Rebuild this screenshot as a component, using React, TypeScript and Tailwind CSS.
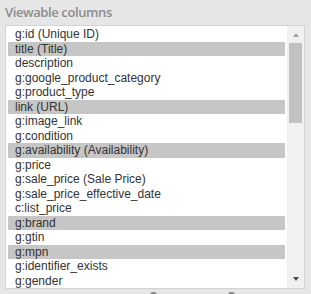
import React from 'react';

const columns: { name: string; selected?: boolean }[] = [
  { name: 'g:id (Unique ID)' },
  { name: 'title (Title)', selected: true },
  { name: 'description' },
  { name: 'g:google_product_category' },
  { name: 'g:product_type' },
  { name: 'link (URL)', selected: true },
  { name: 'g:image_link' },
  { name: 'g:condition' },
  { name: 'g:availability (Availability)', selected: true },
  { name: 'g:price' },
  { name: 'g:sale_price (Sale Price)' },
  { name: 'g:sale_price_effective_date' },
  { name: 'c:list_price' },
  { name: 'g:brand', selected: true },
  { name: 'g:gtin' },
  { name: 'g:mpn', selected: true },
  { name: 'g:identifier_exists' },
  { name: 'g:gender' },
];

export default function App() {
  return (
    <div className="w-[311px] h-[294px] overflow-hidden bg-[#e6e6e6] font-['Liberation_Sans',Arial,sans-serif]">
      <div className="pl-[5px] pt-[4px] h-[25px] text-[13px] leading-[16px] font-['Open_Sans',sans-serif] font-semibold text-[#8c8c8c] tracking-[-0.4px]">
        Viewable columns
      </div>

      <div className="ml-[5px] w-[300px] h-[264px] flex border border-[#d4d4d4] bg-white">
        {/* option list */}
        <div className="flex-1 overflow-hidden pl-[2px] pt-[1px]">
          {columns.map((c) => (
            <div
              key={c.name}
              className={`h-[14.5px] pl-[7px] text-[12px] leading-[14.5px] text-[#333333] whitespace-nowrap ${
                c.selected ? 'bg-[#c6c6c6]' : ''
              }`}
            >
              {c.name}
            </div>
          ))}
        </div>

        {/* scrollbar */}
        <div className="w-[17px] ml-[2px] bg-[#f1f1f1] flex flex-col items-center">
          <div className="h-[17px] flex items-center justify-center">
            <div className="w-0 h-0 border-l-[3.5px] border-r-[3.5px] border-b-[4px] border-l-transparent border-r-transparent border-b-[#a3a3a3]" />
          </div>
          <div className="w-[13px] h-[80px] bg-[#c1c1c1]" />
          <div className="flex-1" />
          <div className="h-[17px] flex items-center justify-center pb-[2px]">
            <div className="w-0 h-0 border-l-[3.5px] border-r-[3.5px] border-t-[4px] border-l-transparent border-r-transparent border-t-[#505050]" />
          </div>
        </div>
      </div>

      {/* tops of controls below */}
      <div className="flex h-[5px] pt-[3px]">
        <div className="ml-[150px] w-[7px] h-[3px] rounded-t-full bg-[#8a8a8a]" />
        <div className="ml-[71px] w-[7px] h-[3px] rounded-t-full bg-[#8a8a8a]" />
      </div>
    </div>
  );
}
